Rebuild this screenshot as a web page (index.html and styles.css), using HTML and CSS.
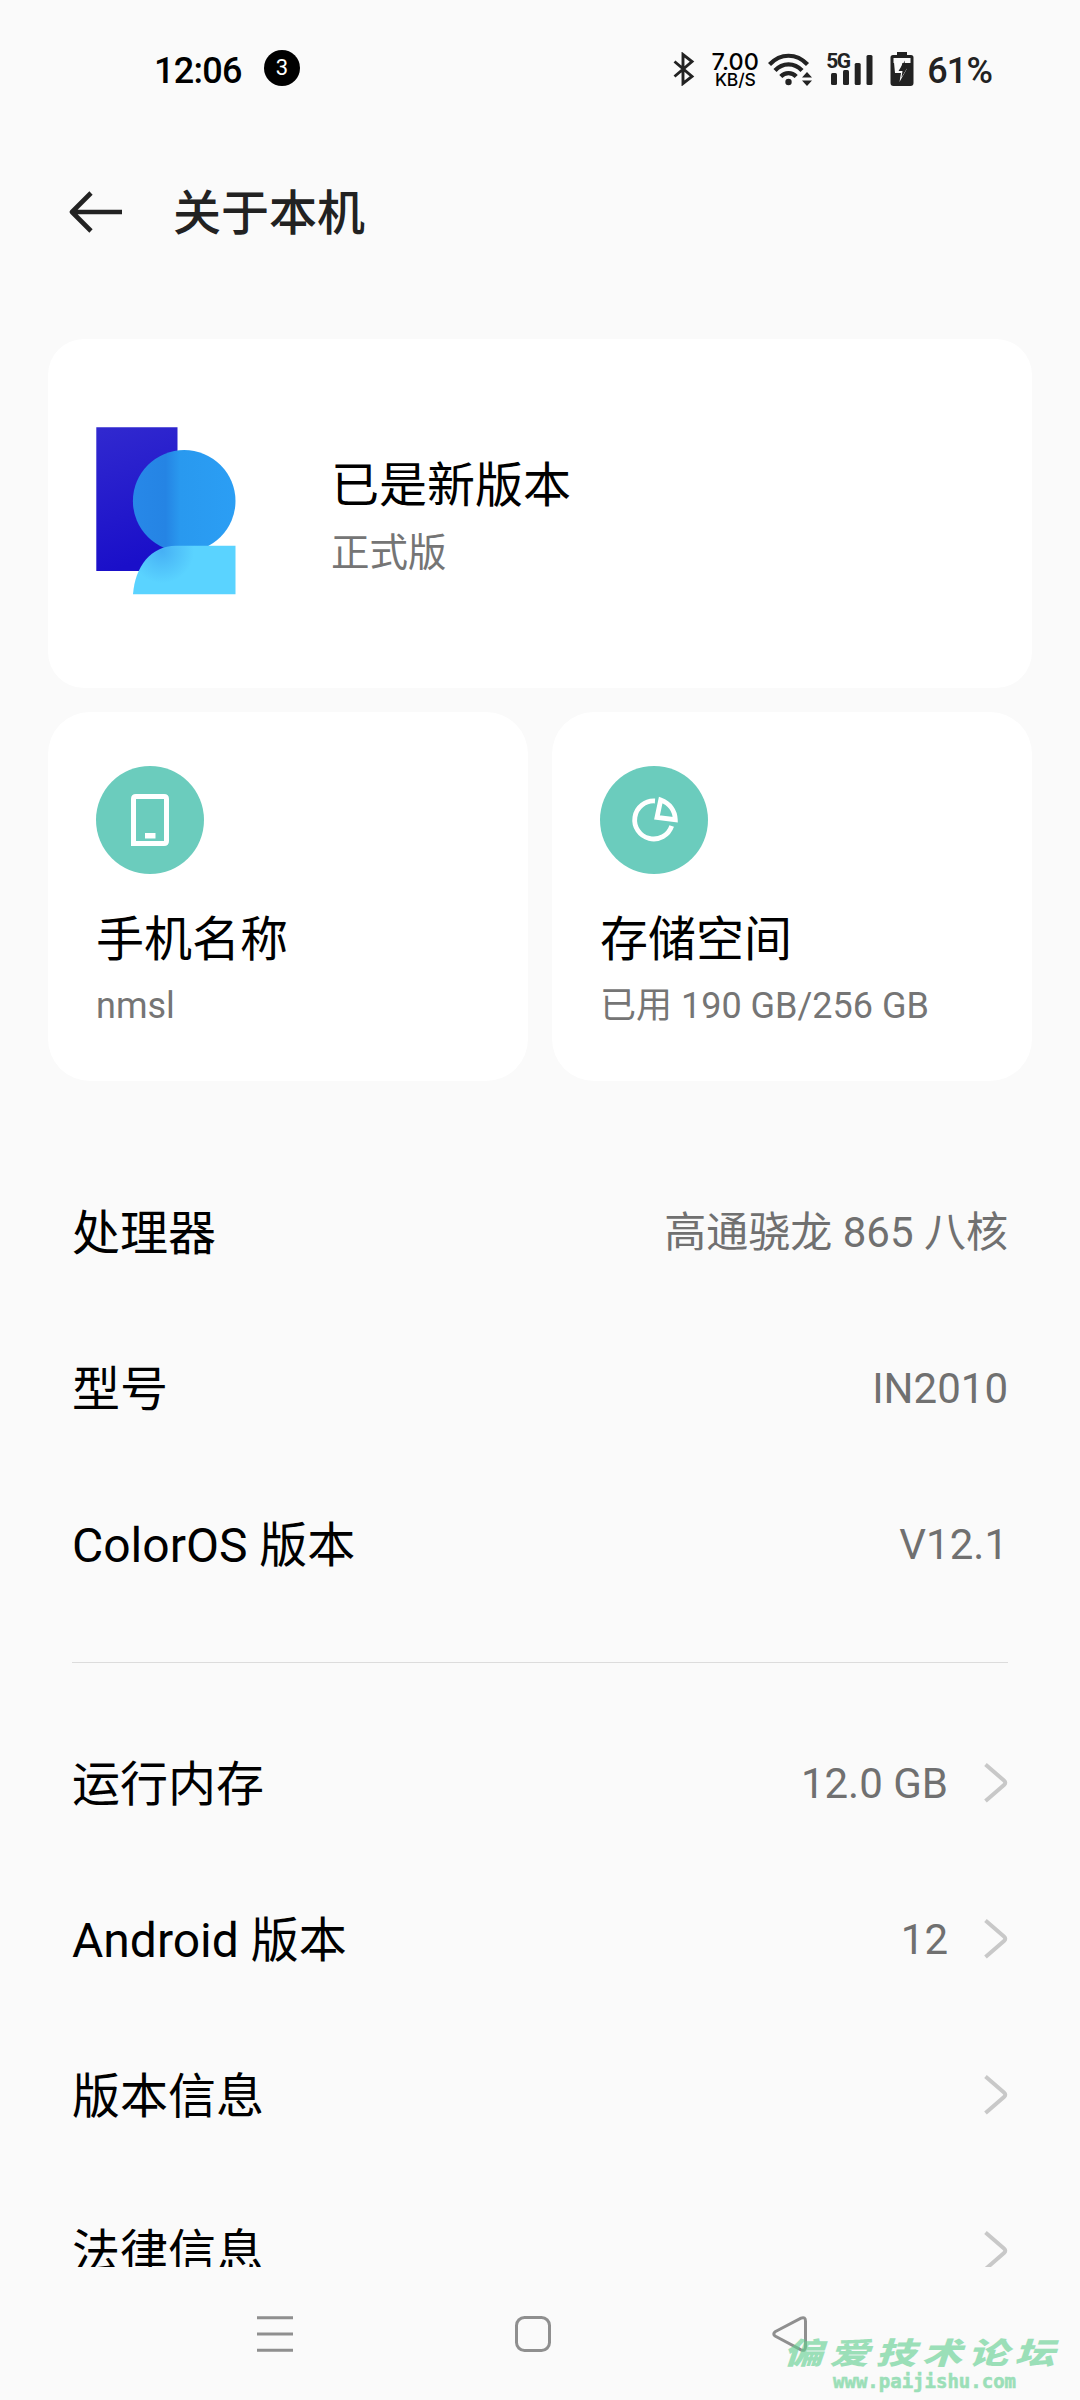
FILE: index.html
```html
<!DOCTYPE html>
<html lang="zh-CN">
<head>
<meta charset="utf-8">
<title>关于本机</title>
<link rel="stylesheet" href="styles.css">
</head>
<body>
<div class="screen">
  <header class="status">
    <span class="clock">12:06</span>
    <span class="count">3</span>
    <div class="status-icons">
      <svg class="bluetooth" width="22" height="34" viewBox="0 0 22 34" fill="none" stroke="#222" stroke-width="2.9"><path d="M1.500 9.500 19 24.500 10 31.500V2.500L19 9.500 1.500 24.500"/></svg>
      <div class="speed"><span class="speed-num">7.00</span><span class="speed-unit">KB/S</span></div>
      <svg class="wifi" width="46" height="34" viewBox="0 0 46 34" fill="none" stroke="#222" stroke-width="4.200">
        <path d="M1.500 12.500C12.500 .8 28.500 .8 39.500 12.500"/><path d="M7 18.500C14.500 10.200 26.500 10.200 34 18.500"/><path d="M12.800 24.500C17 20 24 20 28.200 24.500"/>
        <circle cx="20.500" cy="30" r="3.200" fill="#222" stroke="none"/>
        <path d="M34 25.500 39 20l5 5.500zM34 28.500h10L39 34z" fill="#222" stroke="none"/>
      </svg>
      <div class="signal"><span class="net">5G</span>
        <svg width="48" height="34" viewBox="0 0 48 34" fill="#222"><rect x="5" y="21" width="6" height="12" rx="1.500"/><rect x="17" y="18" width="6" height="15" rx="1.500"/><rect x="28.700" y="11" width="6" height="22" rx="1.500"/><rect x="40.500" y="3" width="6" height="30" rx="1.500"/></svg>
      </div>
      <svg class="battery" width="24" height="36" viewBox="0 0 24 36"><path fill="#222" fill-rule="evenodd" d="M7 1h10v3h4q2.500 0 2.500 2.500V32q0 3-3 3h-17q-3 0-3-3V6.500Q.5 4 3 4h4zM3.500 7v5h17V7z"/><path fill="#fafafa" d="M4 11.500 12.500 11.500 11 17.500h6L9.500 31l1.500-9H5z"/><path fill="#222" d="m15 9.500-6.500 10.500h4l-1 6.500 6-10h-3.500z"/></svg>
      <span class="percent">61%</span>
    </div>
  </header>

  <div class="titlebar">
    <svg width="54" height="42" viewBox="0 0 54 42" fill="none" stroke="#222" stroke-width="4.600"><path d="M22 2 3 21l19 19M3 21h50" stroke-linejoin="round"/></svg>
    <h1>关于本机</h1>
  </div>

  <main class="content">
    <section class="card version">
      <svg class="logo" width="140" height="168" viewBox="0 0 140 168">
        <defs>
          <linearGradient id="slab" x1="0" y1="0" x2=".2" y2="1"><stop offset="0" stop-color="#3129cf"/><stop offset="1" stop-color="#1a0fc9"/></linearGradient>
          <linearGradient id="disc"><stop offset="0" stop-color="#2788e8"/><stop offset=".32" stop-color="#2584e4"/><stop offset=".46" stop-color="#2999ef"/><stop offset="1" stop-color="#2b9ef4"/></linearGradient>
          <radialGradient id="base" gradientUnits="userSpaceOnUse" cx="66" cy="124" r="32"><stop offset="0" stop-color="#46b0f5"/><stop offset=".5" stop-color="#50c2fa"/><stop offset="1" stop-color="#5ad3ff"/></radialGradient>
        </defs>
        <path fill="url(#slab)" d="M.3.300h81.200v143.700H.3z"/>
        <ellipse cx="88.200" cy="74" rx="51.300" ry="51" fill="url(#disc)"/>
        <path fill="url(#base)" d="M37 167.300c2-28 18-48.600 43-48.600h59.500v48.600z"/>
      </svg>
      <div class="version-text"><h2>已是新版本</h2><p>正式版</p></div>
    </section>

    <div class="tiles">
      <section class="card tile">
        <svg width="108" height="108" viewBox="0 0 108 108"><circle cx="54" cy="54" r="54" fill="#6bccbd"/><path d="M37.500 77.500V33q0-2.500 2.500-2.500h28q2.500 0 2.500 2.500v42q0 2.500-2.500 2.500z" fill="none" stroke="#fff" stroke-width="5"/><path d="M49 67h10.500v5.500H49z" fill="#fff"/></svg>
        <h2>手机名称</h2><p>nmsl</p>
      </section>
      <section class="card tile">
        <svg width="108" height="108" viewBox="0 0 108 108"><circle cx="54" cy="54" r="54" fill="#6bccbd"/><g fill="none" stroke="#fff" stroke-width="4.800"><path d="M55 35A19 19 0 1 0 71.700 60"/><path d="M60.700 34 57 51.500l18.300 2.200C75 44.500 69.500 37.300 60.700 34z"/></g></svg>
        <h2>存储空间</h2><p>已用 190 GB/256 GB</p>
      </section>
    </div>

    <ul class="rows">
      <li><span>处理器</span><b>高通骁龙 865 八核</b></li>
      <li><span>型号</span><b>IN2010</b></li>
      <li><span>ColorOS 版本</span><b>V12.1</b></li>
    </ul>
    <hr>
    <ul class="rows links">
      <li><span>运行内存</span><b>12.0 GB</b><svg class="chev" width="24" height="42" viewBox="0 0 24 42"><path d="m1.500 2.500 18.500 16q2.500 2.200 0 4.400l-18.500 16.200"/></svg></li>
      <li><span>Android 版本</span><b>12</b><svg class="chev" width="24" height="42" viewBox="0 0 24 42"><path d="m1.500 2.500 18.500 16q2.500 2.200 0 4.400l-18.500 16.200"/></svg></li>
      <li><span>版本信息</span><svg class="chev" width="24" height="42" viewBox="0 0 24 42"><path d="m1.500 2.500 18.500 16q2.500 2.200 0 4.400l-18.500 16.200"/></svg></li>
      <li><span>法律信息</span><svg class="chev" width="24" height="42" viewBox="0 0 24 42"><path d="m1.500 2.500 18.500 16q2.500 2.200 0 4.400l-18.500 16.200"/></svg></li>
    </ul>
  </main>

  <nav class="navbar">
    <svg width="38" height="38" viewBox="0 0 38 38"><path d="M1 2.700h36M1 19h36M1 35.300h36"/></svg>
    <svg width="38" height="38" viewBox="0 0 38 38"><rect x="2.500" y="2.500" width="33" height="33" rx="8"/></svg>
    <svg width="38" height="38" viewBox="0 0 38 38"><path d="M3.500 16.500 29 3.200q4.500-1.700 4.500 3v25.600q0 4.700-4.500 3L3.500 21.300q-3.500-2.400 0-4.800z"/></svg>
  </nav>
  <div class="watermark"><strong>偏爱技术论坛</strong><em>www.paijishu.com</em></div>
</div>
</body>
</html>
```
FILE: styles.css
```css
* { box-sizing: border-box; margin: 0; padding: 0; }
body {
  width: 1080px;
  height: 2400px;
  background: #fafafa;
  color: #000;
  font-family: Roboto, "Noto Sans CJK SC", sans-serif;
}
svg { display: block; flex: none; }
.screen {
  position: relative;
  display: flex;
  flex-direction: column;
  height: 2400px;
  overflow: hidden;
}

/* Status bar */
.status { display: flex; align-items: center; height: 136px; padding: 0 88px 0 154px; }
.clock { width: 110px; font-size: 36px; font-weight: 500; line-height: 40px; padding-top: 5px; letter-spacing: -.7px; }
.count {
  width: 36px; height: 36px; border-radius: 50%;
  background: #000; color: #fff;
  font-size: 22px; line-height: 36px; text-align: center;
}
.status-icons { display: flex; align-items: center; margin-left: auto; padding-top: 2px; }
.speed {
  display: flex; flex-direction: column; align-items: center;
  width: 50px; margin: 0 8px 0 15px; padding-top: 1px;
  font-weight: 500; font-family: Inter, sans-serif;
}
.speed-num { font-size: 23.500px; line-height: 19px; height: 19px; }
.speed-unit { font-size: 17.500px; line-height: 17px; letter-spacing: -.2px; }
.signal { position: relative; margin: 0 16px 0 12px; }
.net { position: absolute; left: 0; top: 0; font-size: 21px; line-height: 18px; font-weight: 700; color: #222; letter-spacing: -1.500px; }
.percent { margin-left: 13px; padding-top: 3px; font-size: 36px; line-height: 40px; font-weight: 500; color: #222; letter-spacing: -.9px; }

/* Title */
.titlebar { display: flex; align-items: center; gap: 50px; height: 152px; padding-left: 69px; }
.titlebar h1 { padding-top: 4px; font-size: 48px; font-weight: 500; line-height: 60px; color: #222; }

/* Scrolling content, cut off above the navigation bar */
.content { height: 1979px; padding: 51px 48px 0; overflow: hidden; }
.card { background: #fff; border-radius: 36px; }
.version { display: flex; align-items: center; gap: 95px; height: 349px; padding: 0 48px; }
.logo { margin-bottom: 5px; }
.version-text { padding-top: 15px; }
h2 { font-size: 48px; font-weight: 400; line-height: 64px; }
p { font-size: 36px; line-height: 52px; color: #757575; }
.version-text p { font-size: 38.500px; line-height: 70px; }
.tiles { display: grid; grid-template-columns: 1fr 1fr; gap: 24px; margin-top: 24px; }
.tile { height: 369px; padding: 54px 48px; border-radius: 42px; }
.tile h2 { margin-top: 34px; }
.tile p { margin-top: 8px; }

.rows { list-style: none; padding: 73px 24px 0; }
.rows li { display: flex; align-items: center; height: 156px; }
.rows span { flex: 1; padding-top: 3px; font-size: 48px; line-height: 64px; }
.rows b { padding-top: 2px; font-size: 42px; font-weight: 400; line-height: 56px; color: #707070; }
hr { border: 0; height: 1px; margin: 40px 24px 0; background: #dcdcdc; }
.links { padding-top: 42px; }
.chev { margin-left: 36px; fill: none; stroke: #c8c8c8; stroke-width: 4; }

/* System navigation */
.navbar { display: flex; justify-content: space-between; align-items: center; height: 133px; padding: 0 270px 0 256px; }
.navbar svg { fill: none; stroke: #8f8f8f; stroke-width: 3; }

.watermark {
  position: absolute; left: 783px; top: 2337px; width: 276px;
  color: #62cf90; opacity: .62;
}
.watermark strong {
  display: block; width: 210px; white-space: nowrap;
  font-size: 30px; line-height: 34px; font-weight: 900; font-style: italic; letter-spacing: 4.500px;
  transform: scaleX(1.34); transform-origin: 0 0;
}
.watermark em {
  display: block; margin-left: 50px;
  font: 700 19px/21px "DejaVu Sans Mono", monospace;
  -webkit-text-stroke: .6px #62cf90;
}
```
